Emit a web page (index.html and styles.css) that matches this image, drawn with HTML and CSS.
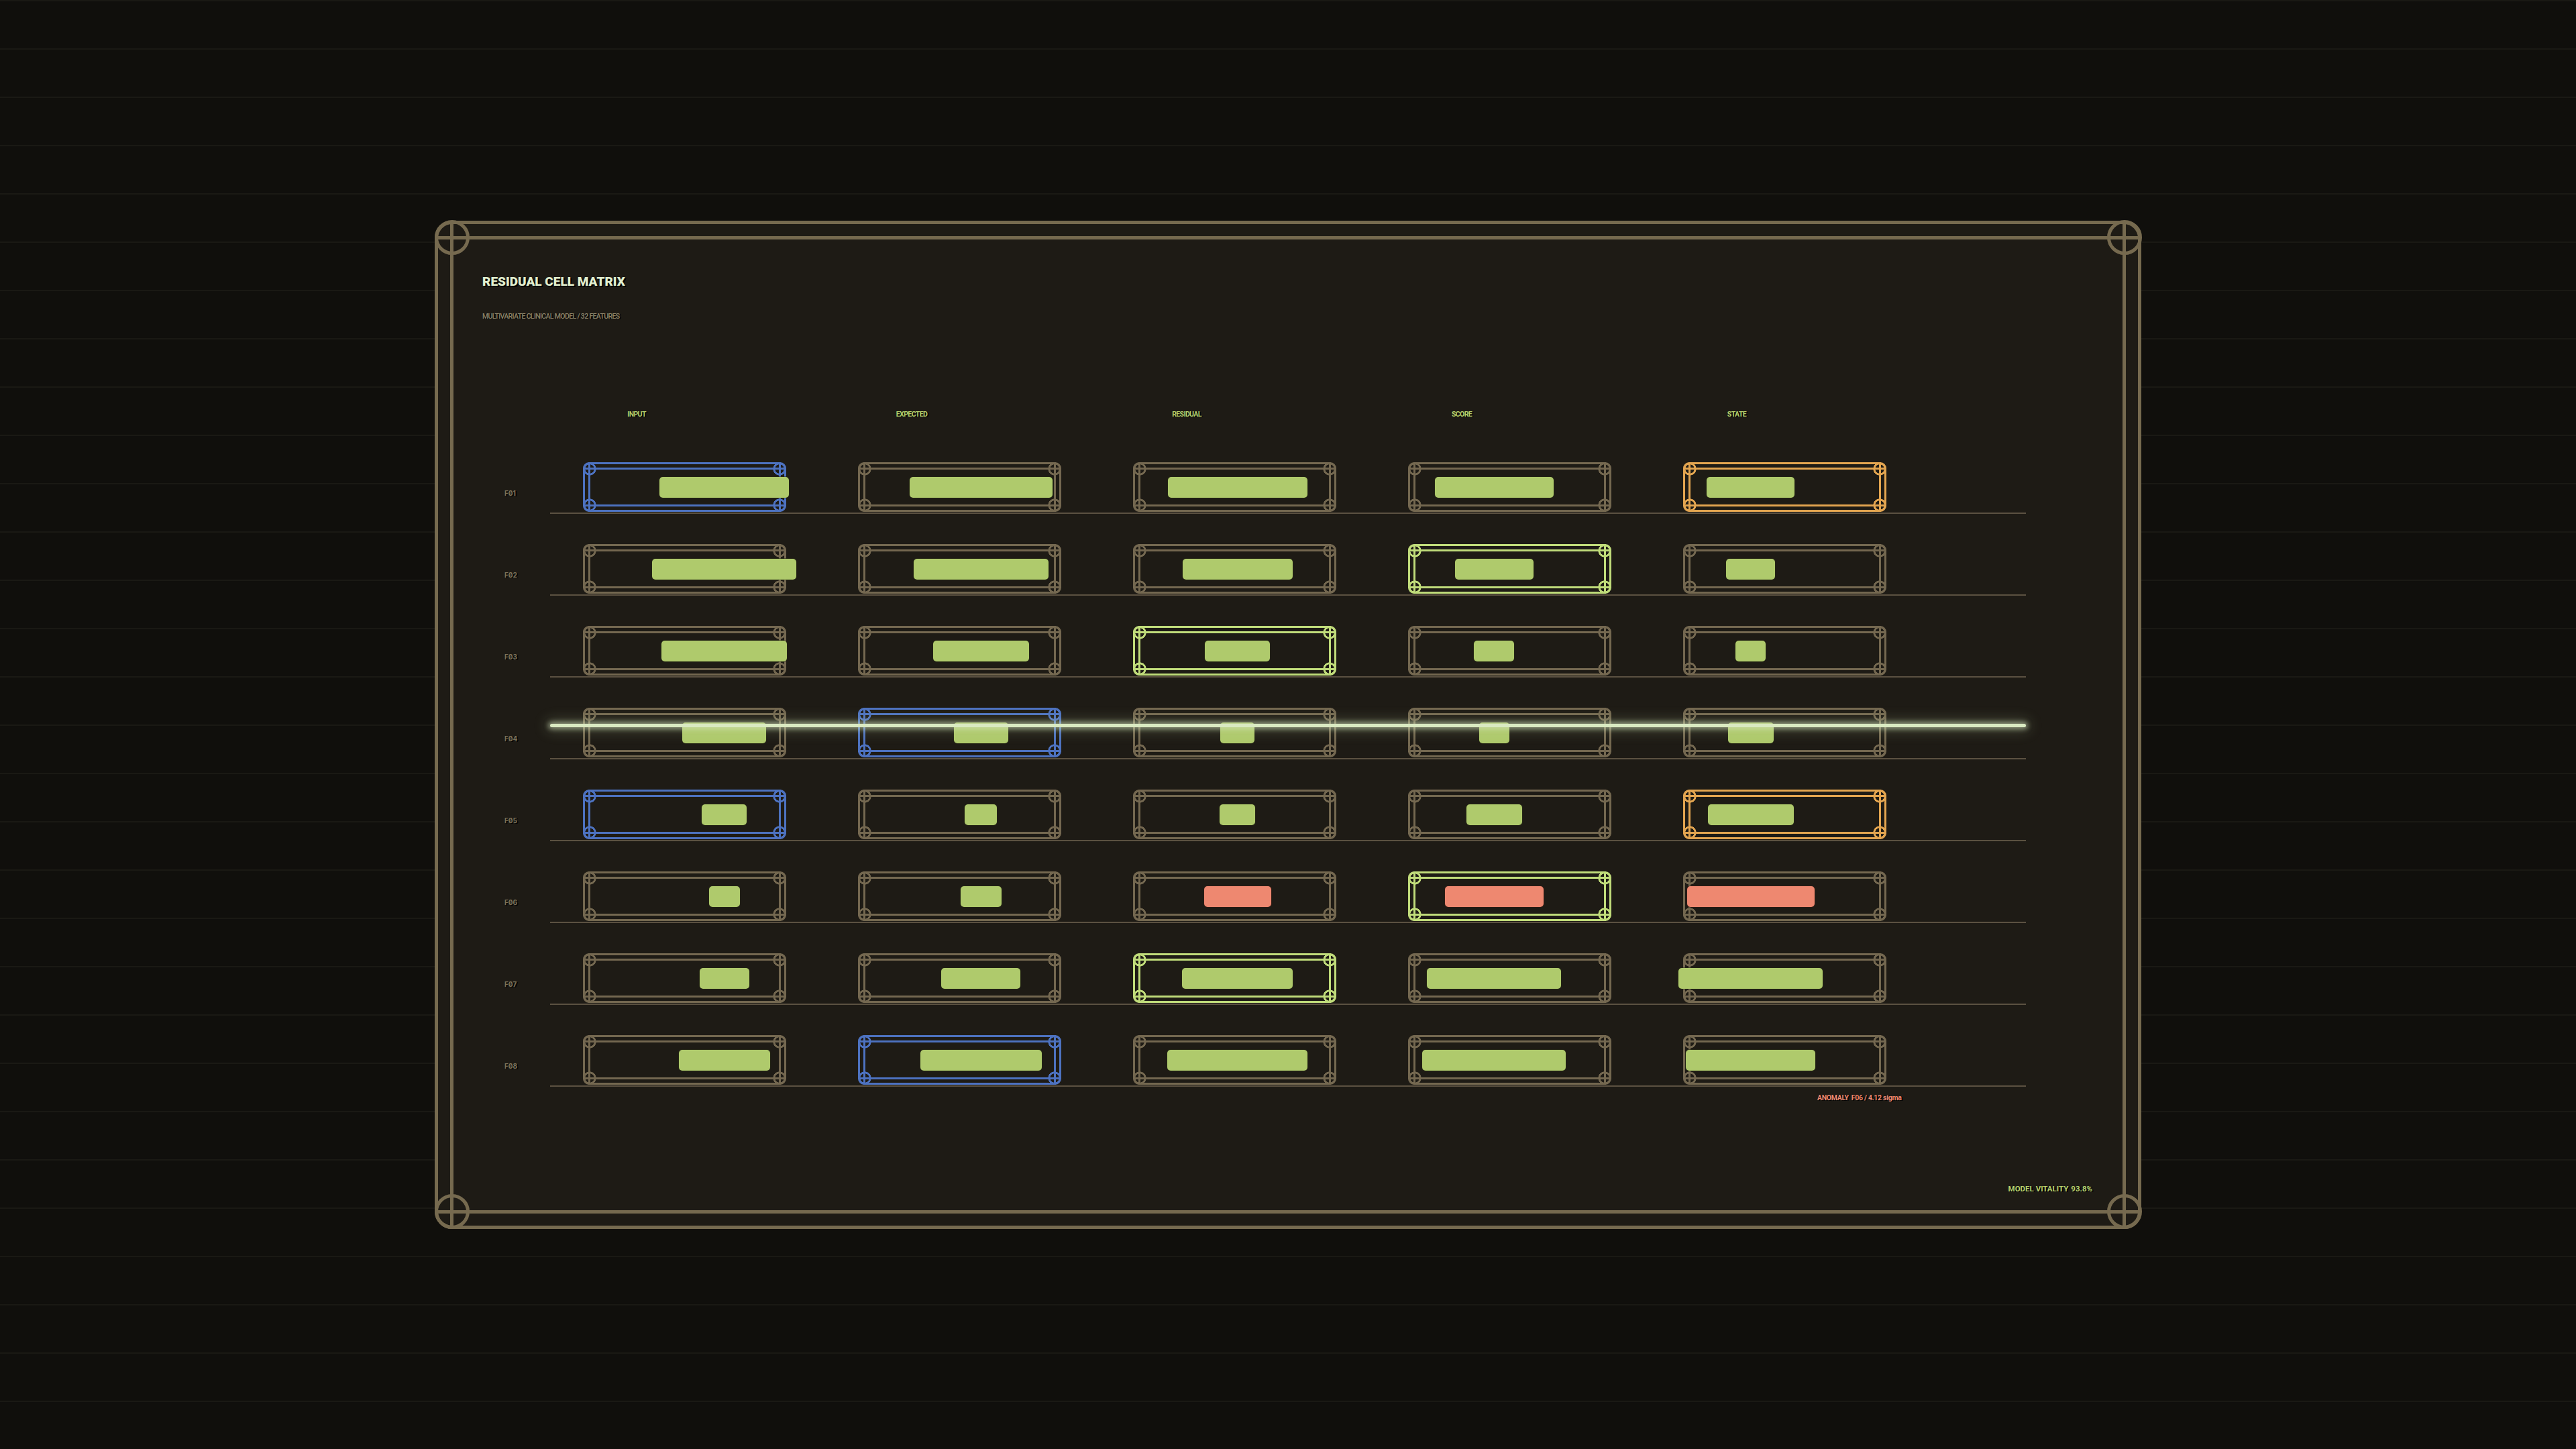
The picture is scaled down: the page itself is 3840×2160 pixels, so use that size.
FILE: index.html
```html
<!DOCTYPE html>
<html lang="en">
<head>
<meta charset="utf-8">
<title>Residual Cell Matrix</title>
<link rel="stylesheet" href="styles.css">
</head>
<body>
<div class="screen">
  <section class="panel">
    <i class="ring tl"></i><i class="ring tr"></i><i class="ring bl"></i><i class="ring br"></i>
    <h1 class="title">RESIDUAL CELL MATRIX</h1>
    <p class="sub">MULTIVARIATE CLINICAL MODEL / 32 FEATURES</p>
    <div class="matrix">
      <div class="head">
        <span class="hl"></span>
        <div class="hb">
          <span>INPUT</span><span>EXPECTED</span><span>RESIDUAL</span><span>SCORE</span><span>STATE</span>
        </div>
      </div>
      <div class="rows">
        <div class="scan"></div>
        <div class="row"><span class="rl">F01</span><div class="rb">
          <div class="cell b"><i class="bar" style="--w:193px"></i></div>
          <div class="cell"><i class="bar" style="--w:213px"></i></div>
          <div class="cell"><i class="bar" style="--w:208px"></i></div>
          <div class="cell"><i class="bar" style="--w:177px"></i></div>
          <div class="cell o"><i class="bar" style="--w:131px"></i></div>
        </div></div>
        <div class="row"><span class="rl">F02</span><div class="rb">
          <div class="cell"><i class="bar" style="--w:215px"></i></div>
          <div class="cell"><i class="bar" style="--w:201px"></i></div>
          <div class="cell"><i class="bar" style="--w:164px"></i></div>
          <div class="cell g"><i class="bar" style="--w:117px"></i></div>
          <div class="cell"><i class="bar" style="--w:73px"></i></div>
        </div></div>
        <div class="row"><span class="rl">F03</span><div class="rb">
          <div class="cell"><i class="bar" style="--w:187px"></i></div>
          <div class="cell"><i class="bar" style="--w:143px"></i></div>
          <div class="cell g"><i class="bar" style="--w:97px"></i></div>
          <div class="cell"><i class="bar" style="--w:60px"></i></div>
          <div class="cell"><i class="bar" style="--w:45px"></i></div>
        </div></div>
        <div class="row"><span class="rl">F04</span><div class="rb">
          <div class="cell"><i class="bar" style="--w:125px"></i></div>
          <div class="cell b"><i class="bar" style="--w:81px"></i></div>
          <div class="cell"><i class="bar" style="--w:51px"></i></div>
          <div class="cell"><i class="bar" style="--w:45px"></i></div>
          <div class="cell"><i class="bar" style="--w:68px"></i></div>
        </div></div>
        <div class="row"><span class="rl">F05</span><div class="rb">
          <div class="cell b"><i class="bar" style="--w:67px"></i></div>
          <div class="cell"><i class="bar" style="--w:48px"></i></div>
          <div class="cell"><i class="bar" style="--w:53px"></i></div>
          <div class="cell"><i class="bar" style="--w:83px"></i></div>
          <div class="cell o"><i class="bar" style="--w:128px"></i></div>
        </div></div>
        <div class="row"><span class="rl">F06</span><div class="rb">
          <div class="cell"><i class="bar" style="--w:46px"></i></div>
          <div class="cell"><i class="bar" style="--w:61px"></i></div>
          <div class="cell"><i class="bar r" style="--w:100px"></i></div>
          <div class="cell g"><i class="bar r" style="--w:147px"></i></div>
          <div class="cell"><i class="bar r" style="--w:190px"></i></div>
        </div></div>
        <div class="row"><span class="rl">F07</span><div class="rb">
          <div class="cell"><i class="bar" style="--w:74px"></i></div>
          <div class="cell"><i class="bar" style="--w:118px"></i></div>
          <div class="cell g"><i class="bar" style="--w:165px"></i></div>
          <div class="cell"><i class="bar" style="--w:200px"></i></div>
          <div class="cell"><i class="bar" style="--w:215px"></i></div>
        </div></div>
        <div class="row"><span class="rl">F08</span><div class="rb">
          <div class="cell"><i class="bar" style="--w:136px"></i></div>
          <div class="cell b"><i class="bar" style="--w:181px"></i></div>
          <div class="cell"><i class="bar" style="--w:209px"></i></div>
          <div class="cell"><i class="bar" style="--w:214px"></i></div>
          <div class="cell"><i class="bar" style="--w:193px"></i></div>
        </div></div>
      </div>
      <p class="anom">ANOMALY<span class="gap">F06 / 4.12 sigma</span></p>
    </div>
    <p class="vital">MODEL VITALITY<span class="gap">93.8%</span></p>
  </section>
</div>
</body>
</html>
```
FILE: styles.css
```css
html, body {
  margin: 0;
  padding: 0;
}
body {
  background: repeating-linear-gradient(180deg, #1a1914 0 2px, #100f0c 2px 72px);
  font-family: Roboto, "Liberation Sans", sans-serif;
}
.screen {
  width: 3840px;
  height: 2160px;
  display: flex;
  align-items: center;
  justify-content: center;
}
.panel {
  --frame: #766a4f;
  position: relative;
  box-sizing: border-box;
  width: 2544px;
  height: 1503px;
  border: 5px solid var(--frame);
  border-radius: 26px;
  background: #1e1b15;
  padding: 75.5px 0 0 0;
}
.panel::before {
  content: "";
  position: absolute;
  left: -5px;
  right: -5px;
  top: 18px;
  bottom: 18px;
  border-top: 5px solid var(--frame);
  border-bottom: 5px solid var(--frame);
  pointer-events: none;
}
.panel::after {
  content: "";
  position: absolute;
  top: -5px;
  bottom: -5px;
  left: 18px;
  right: 18px;
  border-left: 5px solid var(--frame);
  border-right: 5px solid var(--frame);
  pointer-events: none;
}
.ring {
  position: absolute;
  box-sizing: border-box;
  width: 52px;
  height: 52px;
  border: 5px solid var(--frame);
  border-radius: 50%;
}
.ring.tl { left: -5.5px; top: -5.5px; }
.ring.tr { right: -5.5px; top: -5.5px; }
.ring.bl { left: -5.5px; bottom: -5.5px; }
.ring.br { right: -5.5px; bottom: -5.5px; }

.title {
  margin: 0 0 0 66px;
  font-size: 19px;
  line-height: 22px;
  font-weight: 900;
  letter-spacing: 0;
  color: #e2efcf;
  text-shadow: 2px 2px 0 #000;
}
.sub {
  margin: 34px 0 0 66px;
  font-size: 10.5px;
  line-height: 14px;
  font-weight: 500;
  letter-spacing: -0.65px;
  color: #8d8469;
  text-shadow: 2px 1px 0 rgba(0,0,0,.85);
}
.matrix {
  margin: 131.5px 0 0 99px;
}
.head {
  display: flex;
}
.hl {
  width: 68px;
  flex: none;
}
.hb {
  display: flex;
  gap: 107px;
  padding-left: 48.5px;
}
.hb span {
  width: 303px;
  box-sizing: border-box;
  padding-right: 142px;
  text-align: center;
  font-size: 10.5px;
  line-height: 14px;
  font-weight: 700;
  letter-spacing: -0.6px;
  color: #b6d06c;
  text-shadow: 2px 1px 0 rgba(0,0,0,.85);
}
.rows {
  position: relative;
  margin-top: 64.5px;
}
.row {
  display: flex;
  margin-bottom: 45px;
}
.row:last-child {
  margin-bottom: 0;
}
.rl {
  width: 68px;
  flex: none;
  box-sizing: border-box;
  padding-top: 38.5px;
  font-family: Inter, Roboto, sans-serif;
  font-feature-settings: "zero" 1;
  font-size: 10px;
  line-height: 14px;
  font-weight: 700;
  color: #7d7259;
  text-shadow: 2px 1px 0 rgba(0,0,0,.9);
}
.rb {
  width: 2200px;
  flex: none;
  box-sizing: border-box;
  display: flex;
  gap: 107px;
  padding: 0 0 1px 48.5px;
  border-bottom: 2px solid #5b5141;
}
.cell {
  --c: #746850;
  position: relative;
  flex: none;
  box-sizing: border-box;
  width: 303px;
  height: 74px;
  border: 3px solid var(--c);
  border-radius: 9px;
  display: flex;
  align-items: center;
  background-repeat: no-repeat;
  background-image:
    radial-gradient(circle at 7px 7px, transparent 6.4px, var(--c) 7px, var(--c) 9.3px, transparent 9.9px),
    radial-gradient(circle at calc(100% - 7px) 7px, transparent 6.4px, var(--c) 7px, var(--c) 9.3px, transparent 9.9px),
    radial-gradient(circle at 7px calc(100% - 7px), transparent 6.4px, var(--c) 7px, var(--c) 9.3px, transparent 9.9px),
    radial-gradient(circle at calc(100% - 7px) calc(100% - 7px), transparent 6.4px, var(--c) 7px, var(--c) 9.3px, transparent 9.9px);
}
.cell::before {
  content: "";
  position: absolute;
  left: -3px;
  right: -3px;
  top: 5px;
  bottom: 5px;
  border-top: 3px solid var(--c);
  border-bottom: 3px solid var(--c);
}
.cell::after {
  content: "";
  position: absolute;
  top: -3px;
  bottom: -3px;
  left: 5px;
  right: 5px;
  border-left: 3px solid var(--c);
  border-right: 3px solid var(--c);
}
.cell.b { --c: #4d72c0; }
.cell.g { --c: #c0dc7a; }
.cell.o { --c: #e3a550; }

.rb .cell:nth-child(1) { --cx: 208px; }
.rb .cell:nth-child(2) { --cx: 180.5px; }
.rb .cell:nth-child(3) { --cx: 153px; }
.rb .cell:nth-child(4) { --cx: 125.5px; }
.rb .cell:nth-child(5) { --cx: 98px; }

.bar {
  position: relative;
  z-index: 1;
  flex: none;
  display: block;
  width: var(--w);
  height: 31px;
  margin-left: calc(var(--cx) - var(--w) / 2);
  border-radius: 5px;
  background: #afca6c;
  box-shadow: 0 0 0 1px rgba(40, 44, 20, .55);
}
.bar.r {
  background: #ee8870;
  box-shadow: 0 0 0 1px rgba(60, 30, 20, .55);
}
.scan {
  position: absolute;
  left: 68px;
  width: 2200px;
  top: 389.5px;
  height: 5px;
  border-radius: 3px;
  background: #d9e9c1;
  z-index: 3;
  box-shadow: 0 0 7px 3px rgba(216, 232, 192, .55), 0 0 20px 6px rgba(200, 225, 170, .22);
}
.anom {
  margin: 9.5px 0 0 1957px;
  font-size: 10.5px;
  line-height: 14px;
  font-weight: 700;
  letter-spacing: -0.3px;
  color: #ee8870;
  text-shadow: 2px 1px 0 rgba(0,0,0,.85);
}
.gap {
  margin-left: 4px;
}
.vital {
  margin: 121px 0 0 0;
  padding-right: 68px;
  text-align: right;
  font-size: 11.5px;
  line-height: 14px;
  font-weight: 700;
  color: #b7d16e;
  text-shadow: 2px 1px 0 rgba(0,0,0,.85);
}
```
